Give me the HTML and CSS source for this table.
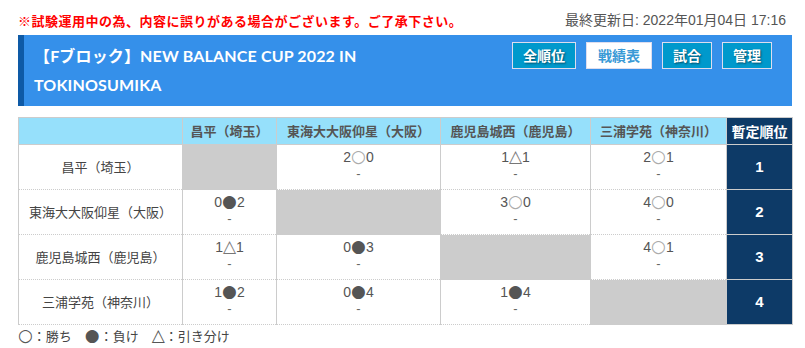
FILE: index.html
```html
<!DOCTYPE html>
<html lang="ja">
<head>
<meta charset="utf-8">
<title>Fブロック 戦績表</title>
<link rel="stylesheet" href="styles.css">
</head>
<body>
<div class="page">
  <div class="topbar">
    <p class="notice">※試験運用中の為、内容に誤りがある場合がございます。ご了承下さい。</p>
    <p class="updated">最終更新日: 2022年01月04日 17:16</p>
  </div>
  <div class="header">
    <h1 class="title">【Fブロック】NEW BALANCE CUP 2022 IN TOKINOSUMIKA</h1>
    <nav class="tabs">
      <a class="tab">全順位</a>
      <a class="tab active">戦績表</a>
      <a class="tab">試合</a>
      <a class="tab">管理</a>
    </nav>
  </div>
  <table class="grid">
    <colgroup>
      <col class="c-team"><col class="c1"><col class="c2"><col class="c3"><col class="c4"><col class="c-rank">
    </colgroup>
    <thead>
      <tr>
        <th></th>
        <th>昌平（埼玉）</th>
        <th>東海大大阪仰星（大阪）</th>
        <th>鹿児島城西（鹿児島）</th>
        <th>三浦学苑（神奈川）</th>
        <th class="rank-h">暫定順位</th>
      </tr>
    </thead>
    <tbody>
      <tr>
        <td class="team">昌平（埼玉）</td>
        <td class="self"></td>
        <td class="score"><span class="n">2</span><span class="m win">○</span><span class="n">0</span><br><span class="dash">-</span></td>
        <td class="score"><span class="n">1</span><span class="m draw">△</span><span class="n">1</span><br><span class="dash">-</span></td>
        <td class="score"><span class="n">2</span><span class="m win">○</span><span class="n">1</span><br><span class="dash">-</span></td>
        <td class="rank">1</td>
      </tr>
      <tr>
        <td class="team">東海大大阪仰星（大阪）</td>
        <td class="score"><span class="n">0</span><span class="m lose">●</span><span class="n">2</span><br><span class="dash">-</span></td>
        <td class="self"></td>
        <td class="score"><span class="n">3</span><span class="m win">○</span><span class="n">0</span><br><span class="dash">-</span></td>
        <td class="score"><span class="n">4</span><span class="m win">○</span><span class="n">0</span><br><span class="dash">-</span></td>
        <td class="rank">2</td>
      </tr>
      <tr>
        <td class="team">鹿児島城西（鹿児島）</td>
        <td class="score"><span class="n">1</span><span class="m draw">△</span><span class="n">1</span><br><span class="dash">-</span></td>
        <td class="score"><span class="n">0</span><span class="m lose">●</span><span class="n">3</span><br><span class="dash">-</span></td>
        <td class="self"></td>
        <td class="score"><span class="n">4</span><span class="m win">○</span><span class="n">1</span><br><span class="dash">-</span></td>
        <td class="rank">3</td>
      </tr>
      <tr>
        <td class="team">三浦学苑（神奈川）</td>
        <td class="score"><span class="n">1</span><span class="m lose">●</span><span class="n">2</span><br><span class="dash">-</span></td>
        <td class="score"><span class="n">0</span><span class="m lose">●</span><span class="n">4</span><br><span class="dash">-</span></td>
        <td class="score"><span class="n">1</span><span class="m lose">●</span><span class="n">4</span><br><span class="dash">-</span></td>
        <td class="self"></td>
        <td class="rank">4</td>
      </tr>
    </tbody>
  </table>
  <p class="legend"><span class="lm">○</span>：勝ち　<span class="lm">●</span>：負け　<span class="lm">△</span>：引き分け</p>
</div>
</body>
</html>
```

FILE: styles.css
```css
html, body {
  margin: 0;
  padding: 0;
  background: #fff;
}
body {
  font-family: "Noto Sans CJK JP", "Noto Sans", sans-serif;
  color: #444;
}
.page {
  padding: 0 13px 0 18px;
}
.topbar {
  display: flex;
  justify-content: space-between;
  align-items: center;
  height: 35px;
  padding-top: 6px;
  box-sizing: border-box;
}
.notice {
  margin: 0;
  color: #f00;
  font-size: 13px;
  letter-spacing: 0.5px;
  font-weight: bold;
  line-height: 29px;
}
.updated {
  margin: 0 6px 0 0;
  color: #555;
  font-size: 14px;
  line-height: 29px;
  font-family: "Liberation Sans", "Noto Sans CJK JP", sans-serif;
}
.header {
  display: flex;
  justify-content: space-between;
  align-items: flex-start;
  background: #3590ea;
  border-left: 6px solid #0e5aa6;
  padding: 6px 20px 7px 10px;
  height: 71px;
  box-sizing: border-box;
}
.title {
  margin: 0;
  width: 350px;
  color: #fff;
  font-family: "Lato", "Noto Sans CJK JP", sans-serif;
  font-weight: bold;
  font-size: 16px;
  letter-spacing: 0.15px;
  line-height: 29px;
}
.tabs {
  display: flex;
  gap: 10px;
  padding-top: 1px;
}
.tab {
  display: block;
  padding: 0 10px;
  height: 27px;
  line-height: 25px;
  box-sizing: border-box;
  border: 1px solid #dde;
  background: #0099cc;
  color: #fff;
  font-size: 14px;
  font-weight: bold;
  text-shadow: 1px 1px 2px rgba(0, 0, 0, 0.5);
}
.tab.active {
  background: #fff;
  color: #3a9ad6;
  text-shadow: none;
  padding: 0 11px;
}
.grid {
  margin-top: 11px;
  border-collapse: collapse;
  width: 774px;
  table-layout: fixed;
}
.c-team { width: 164px; }
.c1 { width: 94px; }
.c2 { width: 164px; }
.c3 { width: 150px; }
.c4 { width: 136px; }
.c-rank { width: 66px; }
.grid thead tr {
  height: 27px;
}
.grid th {
  background: #96e0fb;
  color: #555;
  font-size: 13px;
  font-weight: bold;
  padding: 0;
  line-height: 18px;
  border: 1px solid #ccc;
  white-space: nowrap;
}
.grid th.rank-h {
  background: #0d3a67;
  color: #fff;
  font-size: 14px;
}
.grid tbody tr {
  height: 45px;
}
.grid td {
  padding: 0;
  border-left: 1px solid #ccc;
  border-right: 1px solid #ccc;
  border-top: 1px dotted #ccc;
  border-bottom: 1px dotted #ccc;
  text-align: center;
  line-height: 18px;
}
.grid td.team {
  font-size: 13px;
  color: #444;
  vertical-align: middle;
}
.grid td.self {
  background: #cccccc;
}
.grid td.score {
  vertical-align: top;
  padding-top: 3px;
  font-family: "Liberation Sans", sans-serif;
  font-size: 14px;
  line-height: 16px;
  color: #555;
}
.n {
  color: #555;
}
.m {
  font-family: "DejaVu Sans", sans-serif;
  font-size: 17px;
  line-height: 16px;
}
.m.win { color: #aaa; }
.m.lose { color: #555; }
.m.draw { color: #777; }
.dash {
  color: #666;
  font-size: 13px;
}
.grid td.rank {
  background: #0d3a67;
  color: #fff;
  font-family: "Liberation Sans", sans-serif;
  font-weight: bold;
  font-size: 15px;
  border: 1px solid #ccc;
}
.legend {
  margin: 0;
  height: 23px;
  line-height: 22px;
  font-size: 13px;
  color: #444;
  border-bottom: 1px solid #eee;
}
.lm {
  font-family: "DejaVu Sans", sans-serif;
  font-size: 17px;
  line-height: 16px;
  color: #555;
}
```
